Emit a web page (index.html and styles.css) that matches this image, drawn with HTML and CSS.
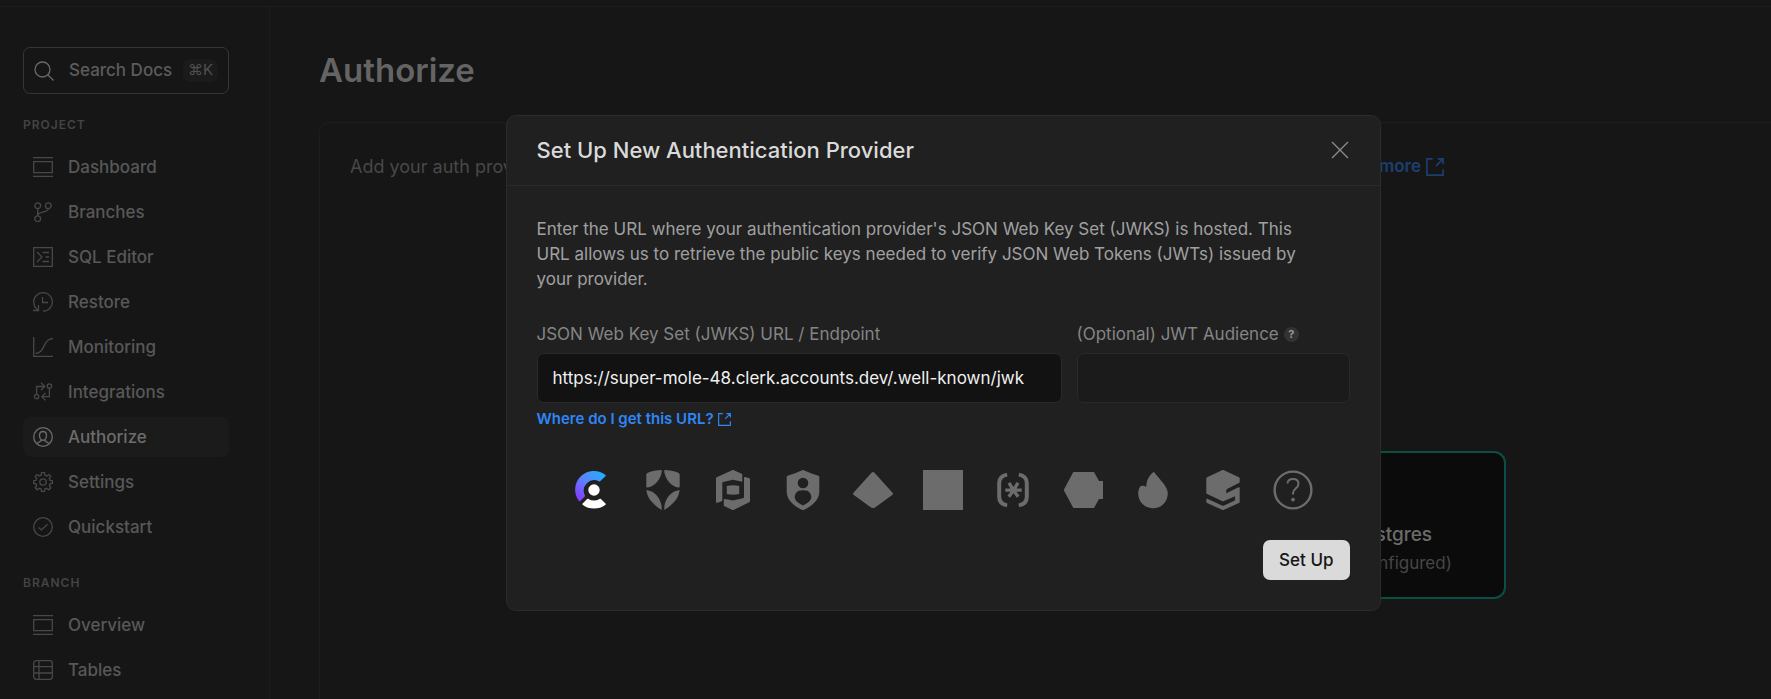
FILE: index.html
```html
<!DOCTYPE html>
<html lang="en">
<head>
<meta charset="utf-8">
<title>Authorize</title>
<link rel="stylesheet" href="styles.css">
</head>
<body>
<svg class="sprite" aria-hidden="true">
  <symbol id="i-window" viewBox="0 0 20 20"><path d="M0 .7h20M0 19.3h20M.7 4.7h18.6v11H.7z"/></symbol>
  <symbol id="i-out" viewBox="0 0 20 20"><path d="M7.500 1H1v18h18v-6.500M19 7V1h-6M19 1l-8 8"/></symbol>
</svg>
<div class="app">
  <div class="topbar"></div>
  <div class="shell">
    <nav class="sidebar">
      <button class="search" type="button">
        <svg class="icon" viewBox="0 0 20 20"><circle cx="8.500" cy="8.500" r="7.500"/><path d="M14 14l5.500 5.500"/></svg>
        <span>Search Docs</span><kbd class="key">⌘K</kbd>
      </button>
      <h2 class="group">Project</h2>
      <ul class="list">
        <li><a class="item" href="#"><svg class="icon"><use href="#i-window"/></svg>Dashboard</a></li>
        <li><a class="item" href="#"><svg class="icon" viewBox="0 0 20 20"><circle cx="4.700" cy="3.700" r="2.900"/><circle cx="15.300" cy="3.700" r="2.900"/><circle cx="4.700" cy="16.700" r="2.900"/><path d="M4.700 6.600v7.200M15.300 6.600c0 5-10.600 2-10.600 7"/></svg>Branches</a></li>
        <li><a class="item" href="#"><svg class="icon" viewBox="0 0 20 20"><path d="M.7.7h18.600v18.600H.7zM4 5l5 5-5 5M9.500 5.500H16M12.500 10H16M9.500 14.500H16"/></svg>SQL Editor</a></li>
        <li><a class="item" href="#"><svg class="icon" viewBox="0 0 20 20"><path d="M10 19.300A9.300 9.300 0 1 0 4.500 17.500M0 18.500h5.500V13M9.500 5v5.500H15"/></svg>Restore</a></li>
        <li><a class="item" href="#"><svg class="icon" viewBox="0 0 20 20"><path d="M.7 0v19.300H20M2.500 16.500C12 16.500 10 1.500 20 1.500"/></svg>Monitoring</a></li>
        <li><a class="item" href="#"><svg class="icon" viewBox="0 0 20 20"><circle cx="3.600" cy="14.500" r="2.200"/><circle cx="16.400" cy="4" r="2.200"/><path d="M3.600 12.300V4.500h7.500M8 .8l3.700 3.700L8 8.200M16.400 6.200v8.500H9M12.500 11l-3.700 3.700 3.700 3.700"/></svg>Integrations</a></li>
        <li><a class="item item-active" href="#" aria-current="page"><svg class="icon" viewBox="0 0 20 20"><circle cx="10" cy="10" r="9.300"/><path d="M10 4.500c-2.300 0-3.500 1.500-3.500 4 0 1.800.6 3.200 1.500 4v1.300L4 16.500M10 4.500c2.300 0 3.500 1.500 3.500 4 0 1.800-.6 3.200-1.500 4v1.300l4 2.700M8 12.500c1.300 1 2.700 1 4 0"/></svg>Authorize</a></li>
        <li><a class="item" href="#"><svg class="icon" viewBox="0 0 20 20"><circle cx="10" cy="10" r="3.200"/><path d="M8.500.7h3l.4 2.500 1.800.8 2.200-1.500 1.900 1.900-1.500 2.200.8 1.800 2.300.4v2.600l-2.300.5-.8 1.800 1.500 2.100-1.900 2-2.200-1.500-1.800.7-.4 2.300h-3l-.4-2.300-1.800-.7-2.200 1.500-1.900-2 1.500-2.100-.8-1.800-2.300-.5V8.800l2.300-.4.8-1.800-1.500-2.200 1.900-1.900L6.300 4l1.800-.8z"/></svg>Settings</a></li>
        <li><a class="item" href="#"><svg class="icon" viewBox="0 0 20 20"><circle cx="10" cy="10" r="9.300"/><path d="M5.500 10.500L8.500 13 14.500 7.300"/></svg>Quickstart</a></li>
      </ul>
      <h2 class="group group-next">Branch</h2>
      <ul class="list">
        <li><a class="item" href="#"><svg class="icon"><use href="#i-window"/></svg>Overview</a></li>
        <li><a class="item" href="#"><svg class="icon" viewBox="0 0 20 20"><rect x=".7" y=".7" width="18.600" height="18.600" rx="2.500"/><path d="M6 .7v18.600M.7 6.700h18.600M.7 13h18.600"/></svg>Tables</a></li>
      </ul>
    </nav>
    <main class="main">
      <h1 class="title">Authorize</h1>
      <section class="panel">
        <p class="intro"><span class="intro-text">Add your auth provider</span><a class="more" href="#">Learn more <svg class="icon-out"><use href="#i-out"/></svg></a></p>
        <div class="db-row">
          <div class="db"><div class="db-fill"><strong class="db-name">Postgres</strong><span class="db-note">(unconfigured)</span></div></div>
        </div>
      </section>
    </main>
  </div>
</div>

<div class="overlay">
  <form class="modal" role="dialog" aria-labelledby="dlg-title">
    <header class="modal-head">
      <h2 class="modal-title" id="dlg-title">Set Up New Authentication Provider</h2>
      <button class="close" type="button" aria-label="Close"><svg viewBox="0 0 16 16" width="16" height="16"><path d="M0 0l16 16M16 0L0 16"/></svg></button>
    </header>
    <div class="modal-body">
      <p class="text">Enter the URL where your authentication provider's JSON Web Key Set (JWKS) is hosted. This URL allows us to retrieve the public keys needed to verify JSON Web Tokens (JWTs) issued by your provider.</p>
      <div class="fields">
        <div class="field">
          <label class="label" for="jwks">JSON Web Key Set (JWKS) URL / Endpoint</label>
          <input class="input input-filled" id="jwks" type="text" value="https://super-mole-48.clerk.accounts.dev/.well-known/jwk">
          <a class="help" href="#">Where do I get this URL? <svg class="help-out"><use href="#i-out"/></svg></a>
        </div>
        <div class="field">
          <label class="label" for="aud">(Optional) JWT Audience <span class="hint">?</span></label>
          <input class="input" id="aud" type="text">
        </div>
      </div>
      <div class="providers">
        <svg viewBox="-1 0 40 40"><defs><linearGradient id="cg" x1="30" y1="3" x2="5" y2="31" gradientUnits="userSpaceOnUse"><stop stop-color="#1fb0fc"/><stop offset=".5" stop-color="#5d81ff"/><stop offset="1" stop-color="#8638ff"/></linearGradient></defs><path fill="url(#cg)" d="M31.500 4.900c.4.300.4.700.1 1.100l-5.400 5.200c-.4.400-.8.400-1.300.1A10.500 10.500 0 0 0 10.900 25.400c.3.400.2.800-.1 1.100l-4.600 4.600c-.4.400-1 .3-1.300-.1A18.800 18.800 0 0 1 31.500 4.900z"/><g fill="#fff"><circle cx="20" cy="20" r="5.700"/><path d="M8.600 34.700c-.3-.3-.3-.8 0-1.200l4.500-4.500c.4-.4.900-.4 1.400-.1a10.700 10.700 0 0 0 11 0c.5-.3 1-.3 1.400.1l4.600 4.500c.4.400.4.900 0 1.200a19 19 0 0 1-22.900 0z"/></g></svg>
        <svg viewBox="0 0 40 40"><path d="M18.700 0v2C17.500 9.500 11.500 16.500 4.500 17.600c-.7 0-1.200-.5-1.200-1.200V5c0-1 .6-1.800 1.500-2.200C9 .8 14 0 18.700 0zM21.300 0v2c1.200 7.500 7.200 14.500 14.200 15.600.7 0 1.200-.5 1.200-1.200V5c0-1-.6-1.800-1.500-2.200C31 .8 26 0 21.300 0zM3.400 20c8.500 1 14.300 8 15.300 17v3C10 34.500 4 28 3.400 20zM36.600 20c-8.500 1-14.300 8-15.300 17v3C30 34.500 36 28 36.600 20z"/></svg>
        <svg viewBox="0 0 40 40"><path d="M3 8.500c0-.6.300-1 .8-1.300L19 .3c.6-.3 1.400-.3 2 0l7.600 3.500c.5.200.7.600.7 1.100v6.200c0 .4-.4.600-.8.500L21 9.900c-.7-.2-1.300-.2-2 0l-8.900 2c-.5.100-.8.500-.8 1v17.300c0 .5-.3.900-.8 1.100l-3.800 1.400c-.9.300-1.700 0-1.700-1zM31 8c0-.7.400-1 1-.9l3.800 1c.7.200 1.200.7 1.200 1.400V31c0 .5-.3 1-.8 1.200L21 39.700c-.6.300-1.400.3-2 0l-7.400-3.400c-.5-.2-.8-.6-.8-1.100v-5.400c0-.6.400-.9 1-.8l7.200 1.300c.7.100 1.300.1 2 0l9-2c.6-.1 1-.6 1-1.200zM13.800 16q3-.8 6.200-.8t6.200.8v8q-3 .8-6.200.8t-6.200-.8z"/></svg>
        <svg viewBox="0 0 40 40"><path fill-rule="evenodd" d="M19.200.2c.5-.2 1-.2 1.600 0 4.800 2.100 9.500 3.800 14.500 5.600.6.200 1 .7 1 1.300V22c0 7.500-7 14-15.200 17.700-.8.400-1.500.4-2.200 0C10.700 36 3.700 29.500 3.700 22V7.100c0-.6.400-1.100 1-1.300C9.700 4 14.400 2.300 19.200.2zM20 7.700a5.300 5.300 0 1 0 0 10.600 5.300 5.300 0 0 0 0-10.600zM15.500 20.800c-2.300 1.500-3.800 3.800-3.800 6.200 0 3.600 4 6.500 7.400 8 .6.300 1.200.3 1.800 0 3.400-1.500 7.400-4.400 7.400-8 0-2.400-1.500-4.700-3.800-6.200-3-.8-6-.8-9 0z"/></svg>
        <svg viewBox="0 0 40 40"><path d="M18.500 2.700c1-1 2-1 3 0l18 20c.7.900.6 1.800-.3 2.400L22 37.400c-1.500.9-2.500.9-4 0L.8 25.100c-.9-.6-1-1.500-.3-2.400z"/></svg>
        <svg viewBox="0 0 40 40"><path d="M0 0h40v40H0z"/></svg>
        <svg viewBox="0 0 40 40"><path class="line" stroke-width="4" d="M14.200 4.600C9 5.500 6.200 8 6.200 13v14c0 5 2.800 7.500 8 8.400M25.800 4.600c5.200.9 8 3.400 8 8.400v14c0 5-2.800 7.500-8 8.400"/><path class="line" stroke-width="3.300" d="M12.300 20.200h16.400M16 12.800l4.500 7.400 4.500-7.400M15.800 26.700l4.700-6.500 4.700 6.500"/></svg>
        <svg viewBox="0 0 40 40"><path d="M.7 20L10.300 2H31l5 9h4v18h-4l-5 9H10.300z"/></svg>
        <svg viewBox="0 0 40 40"><path d="M20.800 1.800C27 10 34.800 16.500 34.800 23.500a14.800 14.800 0 0 1-29.600 0c0-3 .8-5.600 2.300-7.300 2-.6 4-.4 5.800.5-.1-6 2.700-10.900 7.500-14.900z"/></svg>
        <svg viewBox="0 0 40 40"><path d="M19 .3c.6-.3 1.400-.3 2 0l14.900 6.900c.5.300.8.700.8 1.200v3.500c0 .5-.3 1-.8 1.200l-11.800 5.800c-.5.300-.8.700-.8 1.200v3.200l12.300-6c.6-.3 1.100 0 1.100.6v14c0 .5-.3 1-.8 1.200L21 39.700c-.6.300-1.400.3-2 0L4.100 32.900c-.5-.3-.8-.7-.8-1.200v-2.200c0-.7.500-1 1.100-.7L19 35.500c.6.300 1.400.3 2 0l10.300-4.700c.5-.3.800-.7.800-1.200v-3.400L21 30.900c-.6.300-1.400.3-2 0L4.100 23.900c-.5-.3-.8-.7-.8-1.200V8.400c0-.5.300-.9.800-1.200z"/></svg>
        <svg viewBox="0 0 40 40"><g class="line" stroke-width="2.400"><circle cx="20" cy="20" r="18.400"/><path d="M14.500 13.500c0-2.900 2.300-4.600 5.500-4.600s5.500 1.700 5.500 4.800c0 4.600-5.500 4.800-5.500 9.300v1.500" stroke-width="2"/></g><circle cx="20" cy="29.600" r="1.900"/></svg>
      </div>
      <div class="actions"><button class="submit" type="button">Set Up</button></div>
    </div>
  </form>
</div>
</body>
</html>
```
FILE: styles.css
```css
* { box-sizing: border-box; }

body {
  margin: 0;
  background: #161616;
  color: #585858;
  font: 17px/25px Inter, "Liberation Sans", sans-serif;
}

h1, h2, p, ul { margin: 0; padding: 0; }
a { color: inherit; text-decoration: none; }
button, input { font: inherit; }
.sprite { position: absolute; width: 0; height: 0; }

.app { height: 100vh; overflow: hidden; display: flex; flex-direction: column; }
.topbar { height: 7px; border-bottom: 1px solid #1d1d1d; flex: none; }
.shell { display: flex; flex: 1; min-height: 0; }

.sidebar {
  width: 270px;
  flex: none;
  padding: 40px 40px 0 23px;
  border-right: 1px solid #1d1d1d;
  overflow: hidden;
}
.search {
  display: flex;
  align-items: center;
  width: 100%;
  height: 47px;
  padding: 0 10px;
  border: 1px solid #363636;
  border-radius: 7px;
  background: none;
  color: #5c5c5c;
  font-weight: 500;
  white-space: nowrap;
}
.search .icon { margin-right: 15px; color: #6a6a6a; }
.key {
  margin-left: auto;
  padding: 0 5px;
  height: 23px;
  border-radius: 7px;
  background: #1b1b1b;
  color: #505050;
  font: 15px/22px Inter, "DejaVu Sans", sans-serif;
}
.icon { width: 20px; height: 20px; flex: none; fill: none; stroke: currentColor; stroke-width: 1.3; }
.group {
  margin: 21px 0 12px;
  color: #444;
  font-size: 12px;
  font-weight: 600;
  line-height: 20px;
  letter-spacing: 1px;
  text-transform: uppercase;
}
.group-next { margin-top: 26px; }
.list { display: grid; gap: 5px; list-style: none; }
.item {
  display: flex;
  align-items: center;
  gap: 15px;
  height: 40px;
  padding: 0 10px;
  border-radius: 8px;
  font-weight: 500;
}
.item .icon { color: #484848; }
.item-active, .item-active .icon { color: #6c6c6c; }
.item-active { background: #1b1b1b; }

.main { flex: 1; min-width: 0; display: flex; flex-direction: column; padding: 43px 0 0 49px; }
.title { color: #646464; font-size: 33px; line-height: 40px; font-weight: 600; }
.panel {
  flex: 1;
  margin-top: 32px;
  padding: 31px 30px 0;
  border: 1px solid #1d1d1d;
  border-width: 1px 0 0 1px;
  border-radius: 10px 0 0 0;
}
.intro { display: flex; justify-content: space-between; max-width: 1094px; color: #484848; }
.intro-text { font-size: 18px; }
.more { display: flex; align-items: center; gap: 5px; color: #1c3f70; font-weight: 600; }
.icon-out { width: 18px; height: 18px; fill: none; stroke: currentColor; stroke-width: 1.800; }
.db-row { display: flex; justify-content: flex-end; max-width: 1156px; margin-top: 272px; }
.db {
  width: 228px;
  height: 148px;
  padding: 2px;
  border-radius: 12px;
  background: linear-gradient(90deg, #0b5236, #0b4e49);
}
.db-fill {
  display: flex;
  flex-direction: column;
  align-items: center;
  justify-content: flex-end;
  gap: 4px;
  height: 100%;
  padding-bottom: 21px;
  border-radius: 10px;
  background: #0b0b0b;
}
.db-name { color: #6b6b6b; font-size: 19px; font-weight: 500; }
.db-note { color: #464646; }

.overlay {
  position: fixed;
  inset: 0;
  display: flex;
  align-items: flex-start;
  justify-content: center;
  padding: 115px 0 0 115px;
}
.modal {
  width: 875px;
  max-width: 100%;
  border: 1px solid #2b2b2b;
  border-radius: 10px;
  background: #202020;
}
.modal-head {
  display: flex;
  align-items: center;
  justify-content: space-between;
  height: 70px;
  padding: 0 30px 2px;
  border-bottom: 1px solid #2b2b2b;
}
.modal-title { color: #dadada; font-size: 22px; line-height: 30px; font-weight: 500; }
.close { display: flex; padding: 2px; border: 0; background: none; color: #8c8c8c; }
.close svg { overflow: visible; fill: none; stroke: currentColor; stroke-width: 1.300; }
.modal-body { padding: 31px 30px 30px; }
.text { padding-right: 30px; color: #a0a0a0; }
.fields { display: grid; grid-template-columns: minmax(0, 1fr) 273px; gap: 15px; margin-top: 30px; }
.field { display: flex; flex-direction: column; align-items: flex-start; }
.label { display: flex; align-items: center; gap: 5px; color: #858585; }
.hint {
  width: 15px;
  height: 15px;
  border-radius: 50%;
  background: #333;
  color: #999;
  font-size: 11px;
  line-height: 15px;
  font-weight: 700;
  text-align: center;
}
.input {
  width: 100%;
  height: 50px;
  margin-top: 6px;
  padding: 0 15px;
  border: 1px solid #2a2a2a;
  border-radius: 7px;
  outline: 0;
  background: #1b1b1b;
  color: #f0f0f0;
}
.input-filled { background: #121212; }
.help {
  display: flex;
  align-items: center;
  gap: 4px;
  margin-top: 5px;
  color: #2f86f6;
  font-size: 15px;
  line-height: 22px;
  font-weight: 600;
}
.help-out { width: 13px; height: 13px; fill: none; stroke: currentColor; stroke-width: 1.800; }
.providers { display: flex; justify-content: center; gap: 30px; margin-top: 40px; }
.providers svg { width: 40px; height: 40px; fill: #6c6c6c; }
.line { fill: none; stroke: #6c6c6c; }
.actions { display: flex; justify-content: flex-end; margin-top: 30px; }
.submit {
  height: 40px;
  padding: 0 16px;
  border: 0;
  border-radius: 7px;
  background: #dadada;
  color: #161616;
  font-weight: 500;
}
```
